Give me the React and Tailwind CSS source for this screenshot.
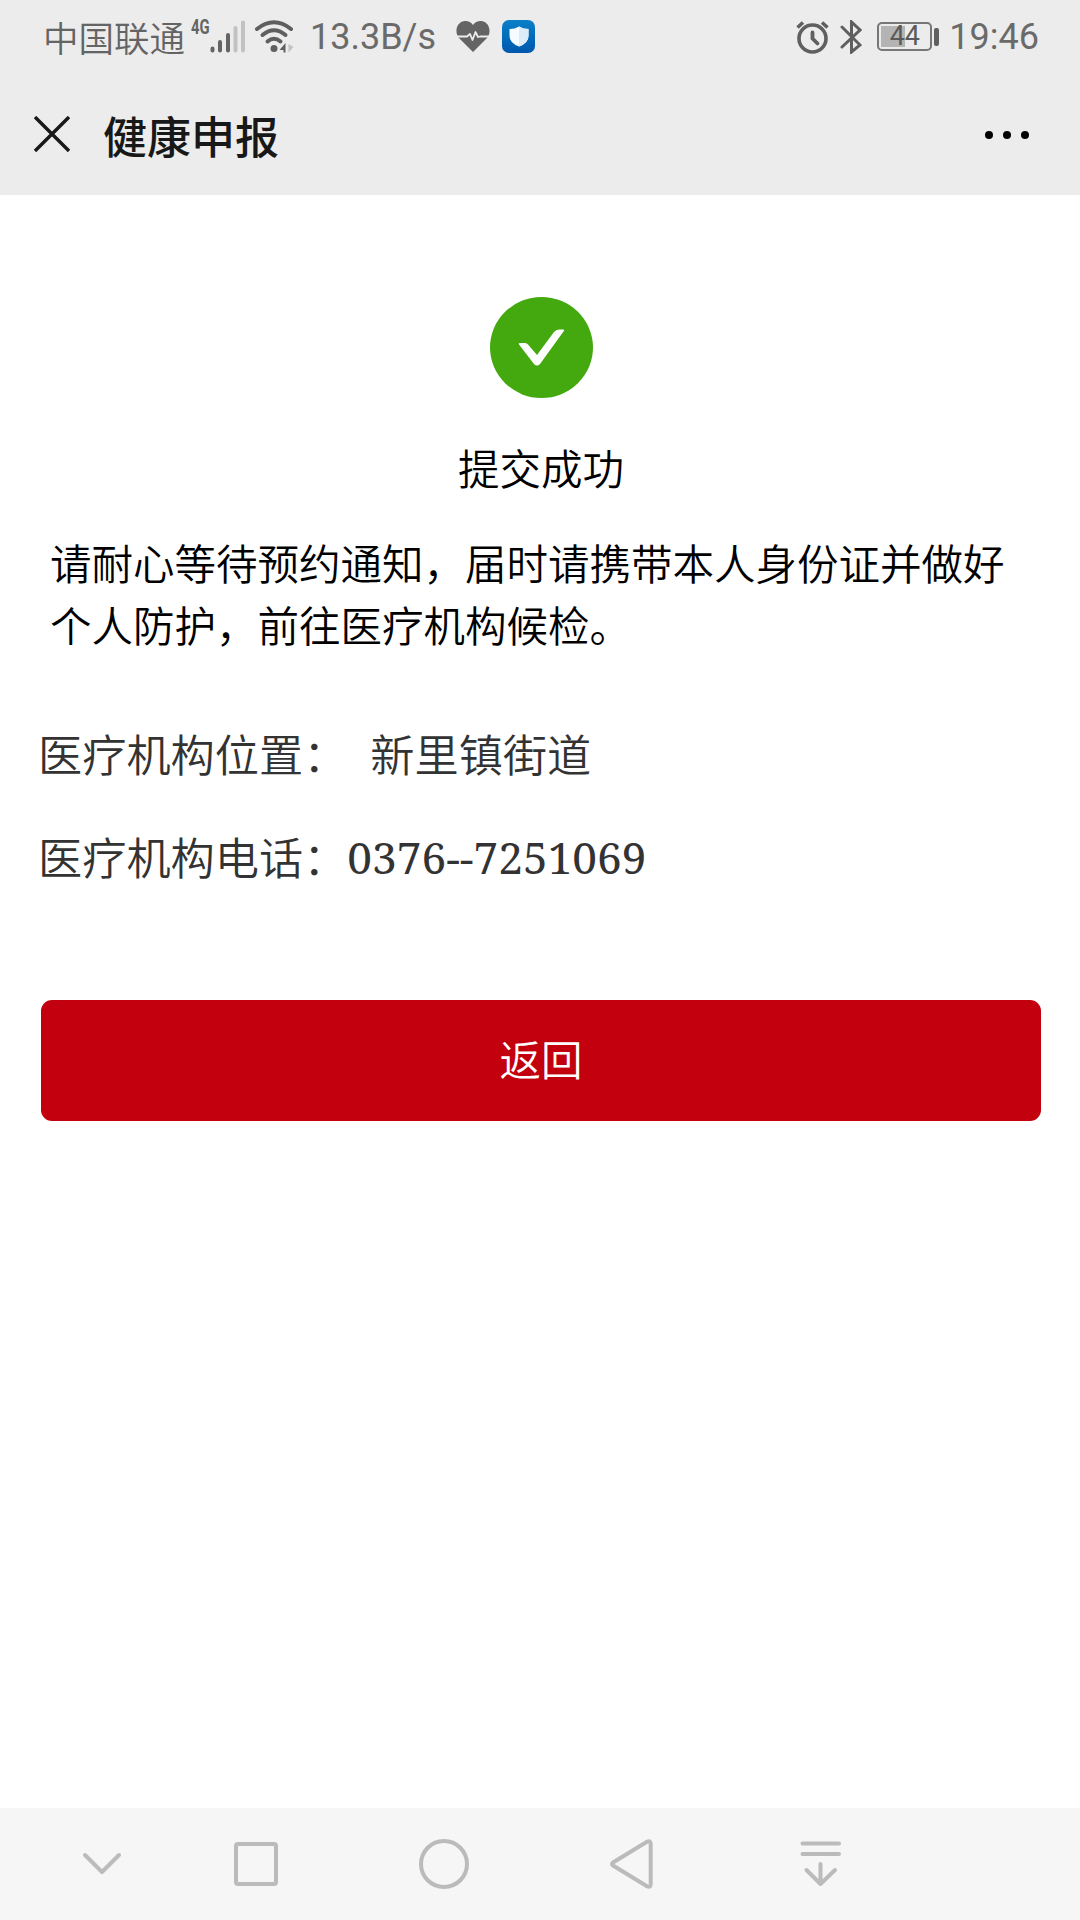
function SignalIcon() {
  return (
    <svg width="36" height="34" viewBox="0 0 36 34" fill="none" strokeWidth="4" strokeLinecap="round">
      <path d="M2.500 28.500V30.500M10 22V30.500M18 15V30.500" stroke="#646464" />
      <path d="M25.500 8V30.500M33 2.500V30.500" stroke="#c2c2c2" />
    </svg>
  );
}

function WifiIcon() {
  return (
    <svg width="42" height="36" viewBox="0 0 42 36" fill="none">
      <g stroke="#5f5f5f" strokeWidth="4" strokeLinecap="round">
        <path d="M3 10Q20 -3.500 37 10" />
        <path d="M8.500 16Q20 6.500 31.500 16" />
        <path d="M13.500 22.500Q20 17 26.500 22.500" />
      </g>
      <circle cx="20" cy="29.500" r="3.500" fill="#5f5f5f" />
      <path d="M31.500 24V33.500H29.500V31H25.500Z" fill="#5f5f5f" />
      <path d="M34.500 25V33.500L39.500 28Z" fill="#c2c2c2" />
    </svg>
  );
}

function HeartIcon() {
  return (
    <svg width="34" height="31" viewBox="0 0 34 31">
      <path
        d="M17 31L3 17C-1.500 12 0 2 7.500 0.300C11.500 -0.400 15 1 17 4C19 1 22.500 -0.400 26.500 0.300C34 2 35.500 12 31 17Z"
        fill="#646464"
      />
      <path
        d="M0 15.500H11L14 13L16.500 19L19.500 11L22 16L24 15.500H34"
        fill="none"
        stroke="#ececec"
        strokeWidth="1.800"
        strokeLinejoin="round"
      />
    </svg>
  );
}

function ShieldIcon() {
  return (
    <div className="flex h-[33px] w-[33px] items-center justify-center rounded-[7px] bg-gradient-to-b from-[#0a80c8] to-[#0058ae]">
      <svg width="20" height="21" viewBox="0 0 20 21">
        <path d="M10 0.500Q14 3 19.500 3V10Q19.500 17 10 20.500Q0.500 17 0.500 10V3Q6 3 10 0.500Z" fill="#f5fbff" />
        <path d="M10 0.500Q14 3 19.500 3V10Q19.500 17 10 20.500Z" fill="#dcecf8" />
      </svg>
    </div>
  );
}

function AlarmIcon() {
  return (
    <svg width="34" height="34" viewBox="0 0 34 34" fill="none" stroke="#5f5f5f" strokeLinecap="round">
      <circle cx="16.500" cy="18.500" r="13.500" strokeWidth="3.600" />
      <path d="M16.500 12.500V18.500L21.500 23.500" strokeWidth="3.800" />
      <path d="M1.500 7.500L7 2.500M26 2.500L31.500 7.500" strokeWidth="3.600" strokeLinecap="butt" />
    </svg>
  );
}

function BluetoothIcon() {
  return (
    <svg width="22" height="34" viewBox="0 0 22 34" fill="none" stroke="#5f5f5f" strokeWidth="3" strokeLinecap="round">
      <path d="M2 7L20 25L11.500 32V2L20 10L2 27" />
    </svg>
  );
}

function Battery({ level }) {
  return (
    <div className="flex items-center gap-[2px]">
      <div className="relative flex h-[29px] w-[55px] items-center justify-center rounded-[5px] border-2 border-[#777]">
        <div className="absolute top-[2px] left-[2px] h-[21px] bg-[#b4b4b4]" style={{ width: `${level * 0.53}px` }}></div>
        <span className="relative font-[Roboto] text-[27px] leading-none font-normal text-[#5a5a5a]">{level}</span>
      </div>
      <div className="h-[18px] w-[5px] rounded-[2px] bg-[#5f5f5f]"></div>
    </div>
  );
}

function StatusBar() {
  return (
    <div className="flex h-[73px] items-center pr-[41px] pl-[43px] text-[#646464]">
      <span className="w-[148px] text-[35.500px] leading-none font-[350] whitespace-nowrap">中国联通</span>
      <span className="mb-[19px] w-[19px] origin-left scale-x-[0.740] font-[Roboto] text-[20px] leading-none font-bold">4G</span>
      <SignalIcon />
      <div className="ml-[8px]">
        <WifiIcon />
      </div>
      <span className="ml-[14px] pt-px font-[Roboto] text-[36px] leading-none font-normal whitespace-nowrap text-[#6a6a6a]">13.3B/s</span>
      <div className="ml-[20px]">
        <HeartIcon />
      </div>
      <div className="ml-[12px]">
        <ShieldIcon />
      </div>
      <div className="ml-auto flex items-center">
        <AlarmIcon />
        <div className="mr-[15px] ml-[10px]">
          <BluetoothIcon />
        </div>
        <Battery level={44} />
        <span className="ml-[10px] pt-px font-[Roboto] text-[36px] leading-none font-normal text-[#6a6a6a]">19:46</span>
      </div>
    </div>
  );
}

function NavBar() {
  return (
    <div className="flex h-[112px] items-center bg-[#f6f6f6] pl-[76px]">
      <svg width="52" height="56" viewBox="0 0 52 56" fill="none" stroke="#bbb" strokeWidth="4" strokeLinecap="round" strokeLinejoin="round">
        <path d="M9 19L26 36L43 19" />
      </svg>
      <svg className="ml-[102px]" width="52" height="56" viewBox="0 0 52 56" fill="none" stroke="#bbb" strokeWidth="4">
        <rect x="6" y="8" width="40" height="40" rx="2" />
      </svg>
      <svg className="ml-[136px]" width="52" height="56" viewBox="0 0 52 56" fill="none" stroke="#bbb" strokeWidth="4">
        <circle cx="26" cy="28" r="23" />
      </svg>
      <svg className="ml-[136px]" width="52" height="56" viewBox="0 0 52 56" fill="none" stroke="#bbb" strokeWidth="4" strokeLinejoin="round">
        <path d="M7 26.500L41 5.800Q44.700 4 44.700 8V48Q44.700 52 41 50.200L7 29.500Q5 28 7 26.500Z" />
      </svg>
      <svg className="ml-[137px]" width="52" height="56" viewBox="0 0 52 56" fill="none" stroke="#bbb" strokeWidth="4" strokeLinecap="round" strokeLinejoin="round">
        <path d="M7.500 7.500H44M7.500 18H44M25.500 28V48M11.500 34L25.500 48L40 34" />
      </svg>
    </div>
  );
}

export default function App() {
  return (
    <div className="flex h-[1920px] w-[1080px] flex-col overflow-hidden bg-white font-['Noto_Sans_CJK_SC',sans-serif] font-[350]">
      <div className="h-[195px] bg-[#ececec]">
        <StatusBar />
        <div className="flex h-[122px] items-center pr-[51px] pl-[34px]">
          <svg width="36" height="36" viewBox="0 0 36 36" stroke="#181818" strokeWidth="3.400">
            <path d="M1 1L35 35M35 1L1 35" />
          </svg>
          <h1 className="mt-px ml-[33px] text-[44px] leading-none font-medium text-[#181818]">健康申报</h1>
          <div className="mt-[2px] ml-auto flex gap-[10px]">
            <span className="h-2 w-2 rounded-full bg-black"></span>
            <span className="h-2 w-2 rounded-full bg-black"></span>
            <span className="h-2 w-2 rounded-full bg-black"></span>
          </div>
        </div>
      </div>

      <div className="flex flex-1 flex-col pt-[102px]">
        <svg className="ml-[490px]" width="103" height="101" viewBox="0 0 103 101">
          <ellipse cx="51.500" cy="50.500" rx="51.500" ry="50.500" fill="#43a90f" />
          <path
            d="M29 47.500Q28 46 30 46H35Q37 46 38 47.500L47 58L64 35Q66 32.500 69 32.500H73Q75 32.500 73.500 34.500L50 67Q47 70 44 67Z"
            fill="#fff"
          />
        </svg>
        <h2 className="mt-[39px] pl-[2px] text-center text-[41.500px] leading-[61px] text-black">提交成功</h2>
        <p className="mt-[34px] pl-[50px] text-[41.500px] leading-[61.500px] whitespace-nowrap text-black">
          请耐心等待预约通知，届时请携带本人身份证并做好
          <br />
          个人防护，前往医疗机构候检。
        </p>

        <div className="mt-[47px] flex flex-col pl-[38px] text-[44.200px] text-[#333]">
          <div className="flex h-[103px] items-center gap-[23px] leading-[103px]">
            <span>医疗机构位置：</span>
            <span>新里镇街道</span>
          </div>
          <div className="flex h-[103px] items-center leading-[103px]">
            <span>医疗机构电话：</span>
            <span className="pt-[2px] font-['Noto_Serif',serif] font-normal">0376--7251069</span>
          </div>
        </div>

        <button className="mx-[41px] mt-[92px] h-[121px] w-[1000px] rounded-[11px] bg-[#c3000d] pb-[5px] text-[41.500px] text-white">
          返回
        </button>
      </div>

      <NavBar />
    </div>
  );
}
